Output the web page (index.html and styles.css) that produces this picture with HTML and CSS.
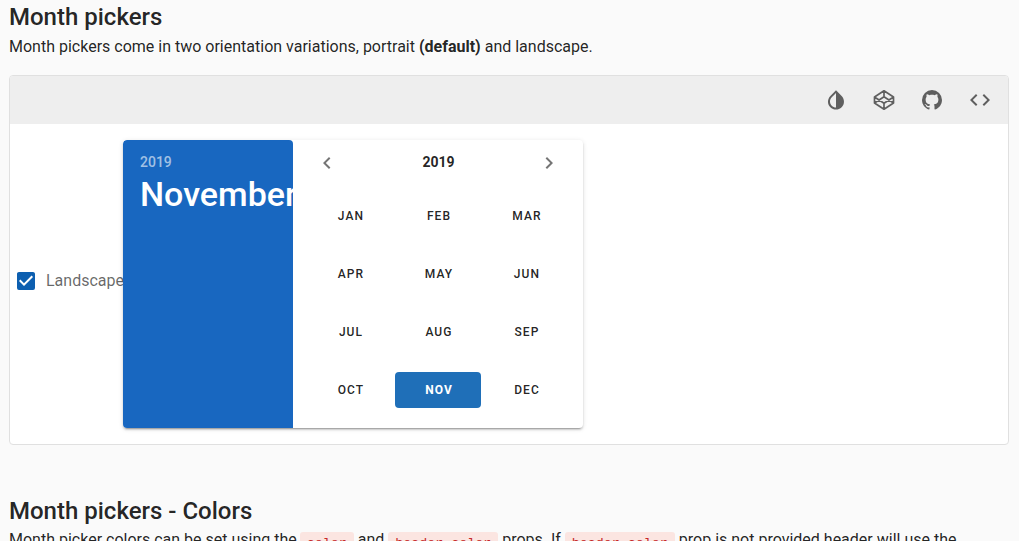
FILE: index.html
```html
<!DOCTYPE html>
<html lang="en">
<head>
<meta charset="utf-8">
<title>Month pickers</title>
<link rel="stylesheet" href="styles.css">
</head>
<body>
<main class="page">
  <h2 class="heading">Month pickers</h2>
  <p class="text">Month pickers come in two orientation variations, portrait <strong>(default)</strong> and landscape.</p>

  <section class="example">
    <div class="toolbar">
      <button class="tool" aria-label="Invert colors"><svg viewBox="0 0 24 24"><path d="M12,19.58V19.58C10.4,19.58 8.89,18.96 7.76,17.83C6.62,16.69 6,15.19 6,13.58C6,12 6.62,10.47 7.76,9.34L12,5.1M17.66,7.93L12,2.27V2.27L6.34,7.93C3.22,11.05 3.22,16.12 6.34,19.24C7.9,20.8 9.95,21.58 12,21.58C14.05,21.58 16.1,20.8 17.66,19.24C20.78,16.12 20.78,11.05 17.66,7.93Z"/></svg></button>
      <button class="tool" aria-label="Codepen"><svg viewBox="0 0 24 24"><path class="line" d="M12 2.8L21.5 9V15L12 21.2L2.5 15V9ZM12 2.8V8.8M12 15.2V21.2M2.5 9L12 15.2L21.5 9M2.5 15L12 8.8L21.5 15"/></svg></button>
      <button class="tool" aria-label="GitHub"><svg viewBox="0 0 24 24"><path d="M12,2A10,10 0 0,0 2,12C2,16.42 4.87,20.17 8.84,21.5C9.34,21.58 9.5,21.27 9.5,21C9.5,20.77 9.5,20.14 9.5,19.31C6.73,19.91 6.14,17.97 6.14,17.97C5.68,16.81 5.03,16.5 5.03,16.5C4.12,15.88 5.1,15.9 5.1,15.9C6.1,15.97 6.63,16.93 6.63,16.93C7.5,18.45 8.97,18 9.54,17.76C9.63,17.11 9.89,16.67 10.17,16.42C7.95,16.17 5.62,15.31 5.62,11.5C5.62,10.39 6,9.5 6.65,8.79C6.55,8.54 6.2,7.5 6.75,6.15C6.75,6.15 7.59,5.88 9.5,7.17C10.29,6.95 11.15,6.84 12,6.84C12.85,6.84 13.71,6.95 14.5,7.17C16.41,5.88 17.25,6.15 17.25,6.15C17.8,7.5 17.45,8.54 17.35,8.79C18,9.5 18.38,10.39 18.38,11.5C18.38,15.32 16.04,16.16 13.81,16.41C14.17,16.72 14.5,17.33 14.5,18.26C14.5,19.6 14.5,20.68 14.5,21C14.5,21.27 14.66,21.59 15.17,21.5C19.14,20.16 22,16.42 22,12A10,10 0 0,0 12,2Z"/></svg></button>
      <button class="tool" aria-label="Source"><svg viewBox="0 0 24 24"><path d="M14.6,16.6L19.2,12L14.6,7.4L16,6L22,12L16,18L14.6,16.6M9.4,16.6L4.8,12L9.4,7.4L8,6L2,12L8,18L9.4,16.6Z"/></svg></button>
    </div>
    <div class="demo">
      <label class="check">
        <svg class="check-box" viewBox="0 0 24 24"><path d="M10,17L5,12L6.41,10.58L10,14.17L17.59,6.58L19,8M19,3H5C3.89,3 3,3.89 3,5V19A2,2 0 0,0 5,21H19A2,2 0 0,0 21,19V5C21,3.89 20.1,3 19,3Z"/></svg>
        <span class="check-label">Landscape</span>
      </label>
      <div class="picker">
        <div class="picker-title">
          <div class="picker-year">2019</div>
          <div class="picker-month">November</div>
        </div>
        <div class="picker-body">
          <div class="picker-nav">
            <svg class="chev" viewBox="0 0 24 24"><path d="M15.41 7.41L14 6l-6 6 6 6 1.41-1.41L10.83 12z"/></svg>
            <strong class="nav-year">2019</strong>
            <svg class="chev" viewBox="0 0 24 24"><path d="M8.59 16.59L10 18l6-6-6-6-1.41 1.41L13.17 12z"/></svg>
          </div>
          <div class="months">
            <button class="month">JAN</button><button class="month">FEB</button><button class="month">MAR</button>
            <button class="month">APR</button><button class="month">MAY</button><button class="month">JUN</button>
            <button class="month">JUL</button><button class="month">AUG</button><button class="month">SEP</button>
            <button class="month">OCT</button><button class="month selected">NOV</button><button class="month">DEC</button>
          </div>
        </div>
      </div>
    </div>
  </section>

  <h2 class="heading second">Month pickers - Colors</h2>
  <p class="text flush">Month picker colors can be set using the <code>color</code> and <code>header-color</code> props. If <code>header-color</code> prop is not provided header will use the</p>
</main>
</body>
</html>
```
FILE: styles.css
```css
* { box-sizing: border-box; }
html, body { margin: 0; height: 100%; overflow: hidden; }
body {
  background: #fafafa;
  color: rgba(0, 0, 0, 0.87);
  font-family: Roboto, "Liberation Sans", sans-serif;
  font-size: 16px;
  line-height: 24px;
}
.page { padding: 1px 10px 0 9px; }
.heading { margin: 0; font-size: 24px; line-height: 32px; font-weight: 500; }
.second { margin-top: 50px; }
.text { margin: 2px 0 0; }
.flush { margin-top: 1px; white-space: nowrap; }
.text strong { font-weight: 700; }
code {
  background: #fbe5e1;
  color: #c62828;
  border-radius: 3px;
  padding: 4px 7px 1px;
  font-family: "Liberation Mono", monospace;
  font-size: 13.33px;
  vertical-align: -2px;
}
code:first-of-type { margin-left: -1px; }
.example {
  margin-top: 16px;
  height: 370px;
  background: #fff;
  border: 1px solid #e0e0e0;
  border-radius: 4px;
  overflow: hidden;
}
.toolbar {
  height: 48px;
  background: #eeeeee;
  display: flex;
  justify-content: flex-end;
  padding-right: 4px;
}
.tool {
  width: 48px;
  height: 48px;
  border: 0;
  padding: 0;
  background: none;
  display: flex;
  align-items: center;
  justify-content: center;
}
.tool svg { width: 24px; height: 24px; fill: rgba(0, 0, 0, 0.6); }
.tool .line { fill: none; stroke: rgba(0, 0, 0, 0.6); stroke-width: 1.7; stroke-linejoin: round; }
.demo { display: flex; align-items: center; padding: 16px 0 0 4px; }
.check { display: flex; align-items: center; gap: 8px; margin: 0 -1px 6px 0; color: rgba(0, 0, 0, 0.6); }
.check-box { width: 24px; height: 24px; fill: #0d5fb0; flex: none; }
.picker {
  width: 460px;
  height: 288px;
  display: flex;
  border-radius: 4px;
  overflow: hidden;
  background: #fff;
  box-shadow: 0 3px 1px -2px rgba(0,0,0,.2), 0 2px 2px 0 rgba(0,0,0,.14), 0 1px 5px 0 rgba(0,0,0,.12);
  position: relative;
}
.picker-title {
  width: 170px;
  flex: none;
  background: #1867c0;
  color: #fff;
  padding: 15px 0 0 17px;
  border-radius: 4px 4px 0 0;
  overflow: hidden;
  white-space: nowrap;
}
.picker-year { font-size: 14px; line-height: 14px; font-weight: 500; color: rgba(255,255,255,.6); }
.picker-month { font-size: 34px; line-height: 40px; font-weight: 500; margin-top: 5px; }
.picker-body { flex: 1; padding: 0 13px; }
.picker-nav {
  height: 47px;
  padding: 0 9px 1px 9px;
  display: flex;
  align-items: center;
  justify-content: space-between;
}
.chev { width: 24px; height: 24px; fill: rgba(0, 0, 0, 0.54); }
.nav-year { font-size: 14px; font-weight: 700; margin: 0 0 2px 1px; }
.months { display: grid; grid-template-columns: repeat(3, 88px); grid-auto-rows: 58px; }
.month {
  height: 36px;
  margin: 11px 1px;
  border: 0;
  padding: 0 0 0 2px;
  background: none;
  border-radius: 4px;
  color: rgba(0, 0, 0, 0.87);
  font-family: inherit;
  font-size: 12px;
  font-weight: 500;
  letter-spacing: 1.07px;
}
.selected { background: #1f6fb8; color: #fff; font-weight: 700; }
```
